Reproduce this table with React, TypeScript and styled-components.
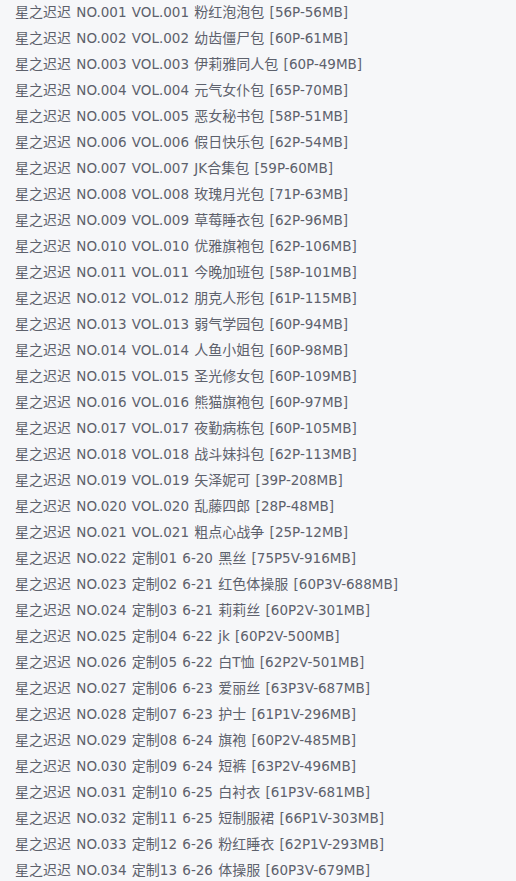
import React from 'react';
import styled, { createGlobalStyle } from 'styled-components';

const GlobalStyle = createGlobalStyle`
  html, body {
    margin: 0;
    padding: 0;
    background: #f6f7f9;
  }
`;

const List = styled.ul`
  list-style: none;
  margin: -2px 0 0;
  padding: 0 0 0 15px;
  font-family: "DejaVu Sans", "Noto Sans CJK SC", sans-serif;
  font-size: 13.5px;
  word-spacing: 1px;
  color: #5d616c;
`;

const Item = styled.li`
  height: 26px;
  line-height: 26px;
  white-space: nowrap;
`;

// CJK runs are set a touch larger than the Latin, like the source font
const Han = styled.span`
  font-family: "Noto Sans CJK SC", sans-serif;
  font-size: 14px;
`;

const items: string[] = [
  'NO.001 VOL.001 粉红泡泡包 [56P-56MB]',
  'NO.002 VOL.002 幼齿僵尸包 [60P-61MB]',
  'NO.003 VOL.003 伊莉雅同人包 [60P-49MB]',
  'NO.004 VOL.004 元气女仆包 [65P-70MB]',
  'NO.005 VOL.005 恶女秘书包 [58P-51MB]',
  'NO.006 VOL.006 假日快乐包 [62P-54MB]',
  'NO.007 VOL.007 JK合集包 [59P-60MB]',
  'NO.008 VOL.008 玫瑰月光包 [71P-63MB]',
  'NO.009 VOL.009 草莓睡衣包 [62P-96MB]',
  'NO.010 VOL.010 优雅旗袍包 [62P-106MB]',
  'NO.011 VOL.011 今晚加班包 [58P-101MB]',
  'NO.012 VOL.012 朋克人形包 [61P-115MB]',
  'NO.013 VOL.013 弱气学园包 [60P-94MB]',
  'NO.014 VOL.014 人鱼小姐包 [60P-98MB]',
  'NO.015 VOL.015 圣光修女包 [60P-109MB]',
  'NO.016 VOL.016 熊猫旗袍包 [60P-97MB]',
  'NO.017 VOL.017 夜勤病栋包 [60P-105MB]',
  'NO.018 VOL.018 战斗妹抖包 [62P-113MB]',
  'NO.019 VOL.019 矢泽妮可 [39P-208MB]',
  'NO.020 VOL.020 乱藤四郎 [28P-48MB]',
  'NO.021 VOL.021 粗点心战争 [25P-12MB]',
  'NO.022 定制01 6-20 黑丝 [75P5V-916MB]',
  'NO.023 定制02 6-21 红色体操服 [60P3V-688MB]',
  'NO.024 定制03 6-21 莉莉丝 [60P2V-301MB]',
  'NO.025 定制04 6-22 jk [60P2V-500MB]',
  'NO.026 定制05 6-22 白T恤 [62P2V-501MB]',
  'NO.027 定制06 6-23 爱丽丝 [63P3V-687MB]',
  'NO.028 定制07 6-23 护士 [61P1V-296MB]',
  'NO.029 定制08 6-24 旗袍 [60P2V-485MB]',
  'NO.030 定制09 6-24 短裤 [63P2V-496MB]',
  'NO.031 定制10 6-25 白衬衣 [61P3V-681MB]',
  'NO.032 定制11 6-25 短制服裙 [66P1V-303MB]',
  'NO.033 定制12 6-26 粉红睡衣 [62P1V-293MB]',
  'NO.034 定制13 6-26 体操服 [60P3V-679MB]',
];

const renderLine = (line: string) =>
  line
    .split(/([\u4e00-\u9fff]+)/)
    .filter(Boolean)
    .map((part, i) =>
      /[\u4e00-\u9fff]/.test(part) ? <Han key={i}>{part}</Han> : part,
    );

const App = (): JSX.Element => {
  return (
    <>
      <GlobalStyle />
      <List>
        {items.map((text) => (
          <Item key={text}>{renderLine(`星之迟迟 ${text}`)}</Item>
        ))}
      </List>
    </>
  );
};

export default App;
